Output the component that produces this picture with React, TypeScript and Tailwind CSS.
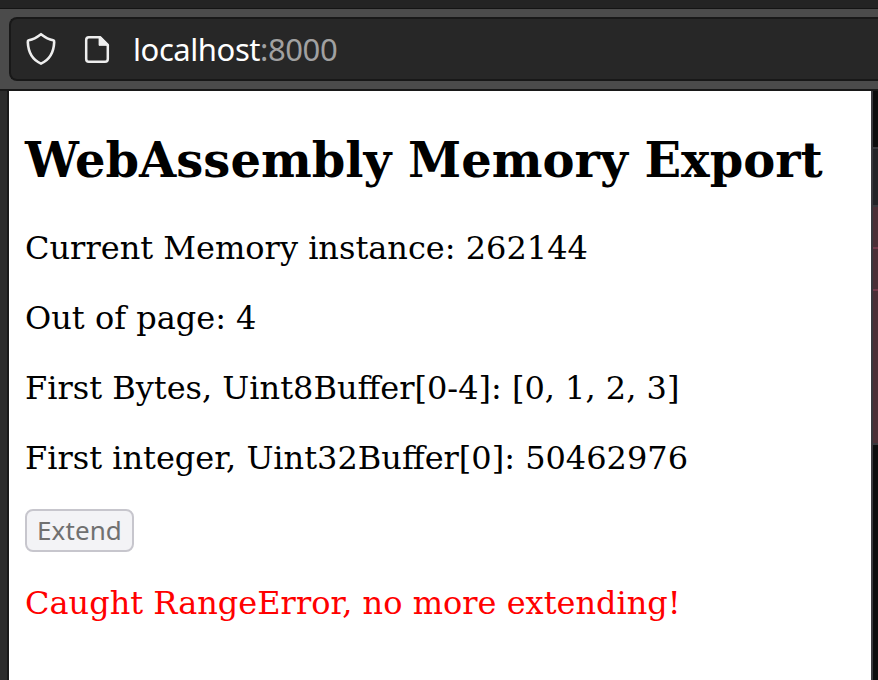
const serif = "font-['DejaVu_Serif',serif]";

function Shield() {
  return (
    <svg width="32" height="34" viewBox="0 0 32 34" fill="none" stroke="#eeeeee" strokeWidth="2.6" strokeLinejoin="round">
      <path d="M16 2.2C19 4.5 24 7.5 28.2 8.3C29 8.5 29.3 9 29.2 10C28.8 19.5 25.6 27.4 16 31.6C6.4 27.4 3.2 19.5 2.8 10C2.7 9 3 8.5 3.8 8.3C8 7.5 13 4.5 16 2.2Z" />
    </svg>
  );
}

function PageIcon() {
  return (
    <svg width="26" height="30" viewBox="0 0 26 30" fill="none">
      <path d="M4.8 2.2H16L23.8 10V24Q23.8 26.8 21 26.8H4.8Q2.2 26.8 2.2 24V5Q2.2 2.2 4.8 2.2Z" stroke="#eeeeee" strokeWidth="2.5" strokeLinejoin="round" />
      <path d="M15 2V10.4H24.5L17 2Z" fill="#eeeeee" stroke="#eeeeee" strokeWidth="0.8" />
    </svg>
  );
}

export default function App() {
  return (
    <div className="flex h-[680px] w-[878px] flex-col overflow-hidden bg-[#4b4b4b]">
      <div className="h-[9px] shrink-0 border-b border-[#141414] bg-[#232323]" />
      <header className="h-[82px] shrink-0 border-b-2 border-[#181818] pt-2 pl-[9px]">
        <div className="flex h-16 items-center rounded-l-lg border-2 border-r-0 border-[#181818] bg-[#272727] pl-[14px]">
          <Shield />
          <span className="ml-[27px] mt-[2px] flex"><PageIcon /></span>
          <div className="ml-[23px] font-['Noto_Sans',sans-serif] text-[31px] leading-10 tracking-[-0.43px] whitespace-nowrap text-white">
            localhost<span className="text-[#a1a1a1]">:8000</span>
          </div>
        </div>
      </header>
      <div className="flex min-h-0 flex-1">
        <div className="w-[9px] shrink-0 border-r-2 border-[#181818] bg-[#2b2b2b]" />
        <main className={`flex w-[862px] shrink-0 flex-col items-start bg-white px-4 text-black ${serif}`}>
          <h1 className="mt-[41px] text-[48px] leading-[56px] font-bold whitespace-nowrap">WebAssembly Memory Export</h1>
          <div className="mt-[41px] flex flex-col gap-8 text-[32px] leading-[38px] whitespace-nowrap">
            <p>Current Memory instance: 262144</p>
            <p>Out of page: 4</p>
            <p>First Bytes, Uint8Buffer[0-4]: [0, 1, 2, 3]</p>
            <p>First integer, Uint32Buffer[0]: 50462976</p>
          </div>
          <button className="mt-8 flex h-[43px] w-[109px] items-center justify-center rounded-lg border-2 border-[#c7c6cd] bg-[#f3f3f6] pb-[2px] font-['Noto_Sans',sans-serif] text-[26px] leading-8 tracking-[0.1px] text-[#707070]">
            Extend
          </button>
          <p className="mt-8 text-[32px] leading-[38px] whitespace-nowrap text-[#ff0000]">Caught RangeError, no more extending!</p>
        </main>
        <aside className="flex flex-1 flex-col border-l-2 border-[#38383d] bg-[#0c0c0d]">
          <div className="h-[56px] shrink-0" />
          <div className="h-[60px] shrink-0 border-y-2 border-[#38383d] bg-[#232327]" />
          <div className="h-[42px] shrink-0 border-b-2 border-[#733a4b] bg-[#4b2f36]" />
          <div className="h-[42px] shrink-0 border-b-2 border-[#733a4b] bg-[#4b2f36]" />
          <div className="h-[154px] shrink-0 border-b-2 border-[#38383d] bg-[#4b2f36]" />
        </aside>
      </div>
    </div>
  );
}
